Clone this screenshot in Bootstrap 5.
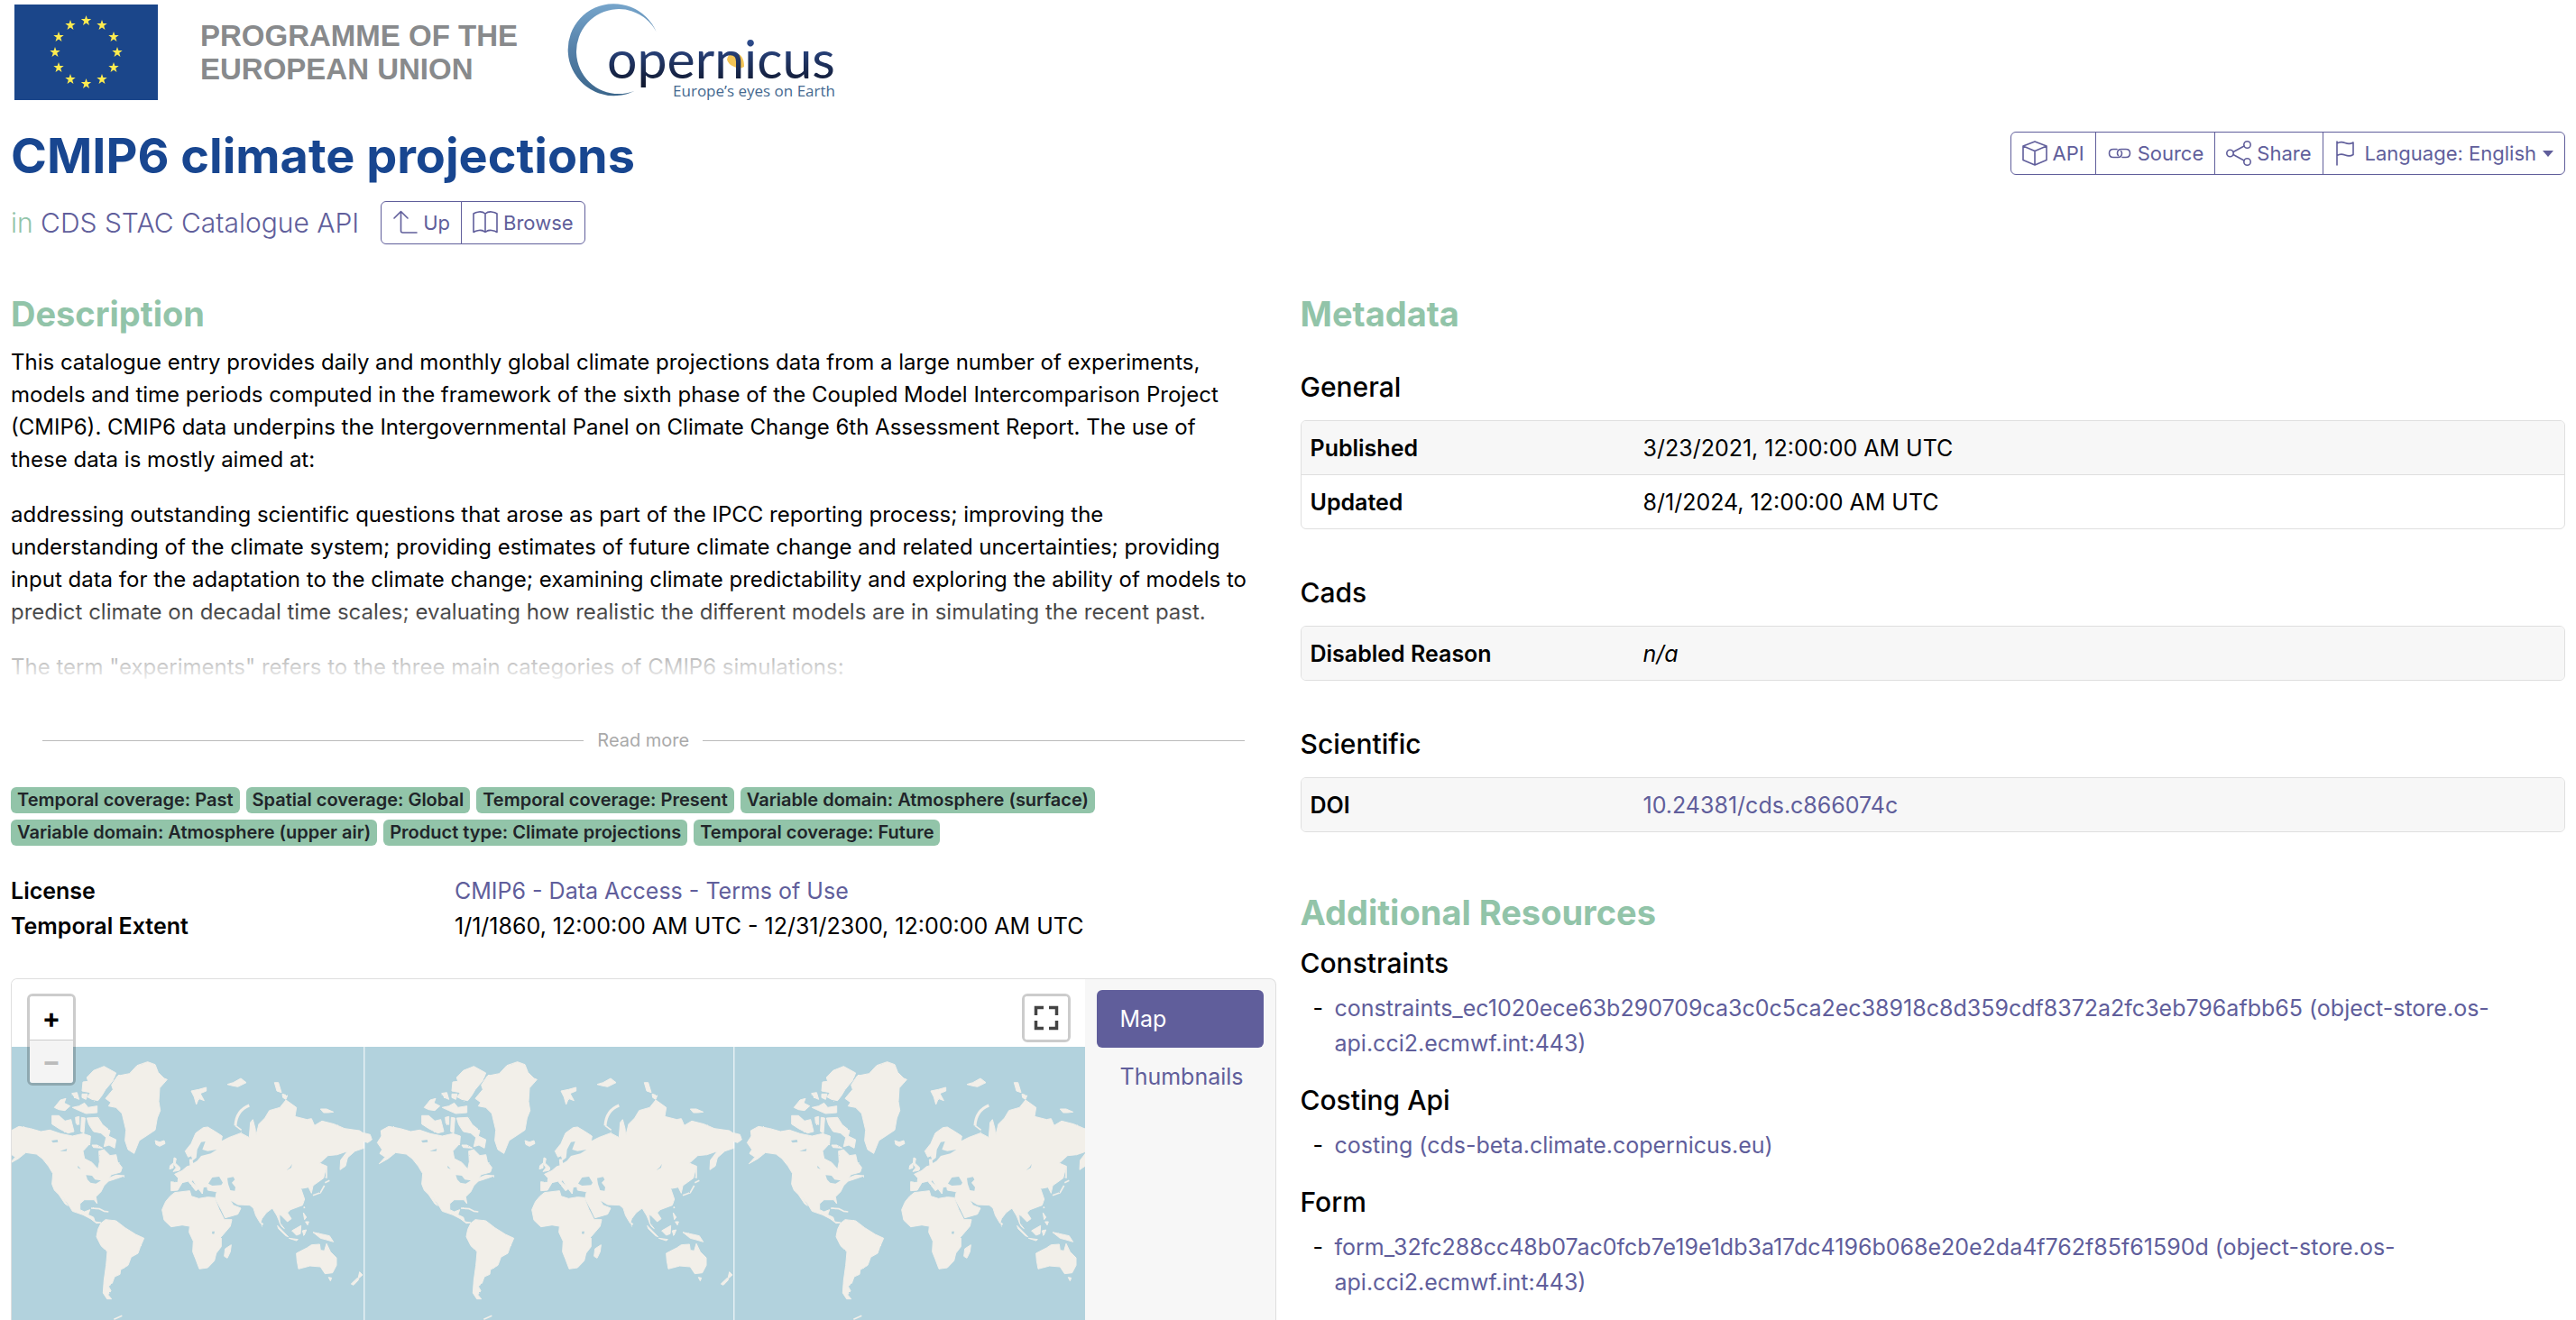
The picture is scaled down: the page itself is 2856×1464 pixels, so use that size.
<!DOCTYPE html>
<html lang="en">
<head>
<meta charset="utf-8">
<meta name="viewport" content="width=device-width, initial-scale=1">
<title>CMIP6 climate projections</title>
<link href="https://cdn.jsdelivr.net/npm/bootstrap@5.3.0/dist/css/bootstrap.min.css" rel="stylesheet">
<style>
:root{--violet:#605e9b;--mint:#92c4a9;--line:#dfdfdf;--shade:#f7f7f7}
body{font-family:Inter,"Liberation Sans",sans-serif;font-size:25px;line-height:39px;color:#000;height:100vh;overflow:hidden;padding:5px 12px 0}
a{color:var(--violet);text-decoration:none}
.eu-flag{width:159px;height:106px;margin-left:4px}
.programme{font-family:"Liberation Sans",Arial,sans-serif;font-weight:700;font-size:33px;line-height:37px;color:#888a8c;margin:16px 0 0 47px}
.cop-logo{width:320px;height:116px;margin:-5px 0 -5px 47px}
h1{font-size:54px;line-height:68px;font-weight:700;color:#184690;margin:28px 0 0}
h2{font-size:38px;line-height:48px;font-weight:700;color:var(--mint);margin:0}
h3{font-size:30px;line-height:36px;font-weight:500;margin:0}
.parent-line{font-size:30px;font-weight:300;color:var(--mint)}
.btn-tool{--bs-btn-color:var(--violet);--bs-btn-border-color:var(--violet);--bs-btn-hover-bg:var(--violet);--bs-btn-hover-color:#fff;--bs-btn-padding-x:12px;--bs-btn-padding-y:0;--bs-btn-border-radius:6px;--bs-btn-font-size:22px;--bs-btn-line-height:46px;display:inline-flex;align-items:center;gap:6px}
.btn-tool svg{width:28px;height:28px;fill:none;stroke:currentColor;stroke-width:1.6;stroke-linejoin:round;stroke-linecap:round}
.btn-tool.dropdown-toggle::after{margin-left:1px;vertical-align:0;border-top-width:7px;border-left-width:6px;border-right-width:6px}
.toolbar-top{margin-top:35px}
.main-row{--bs-gutter-x:27px;margin-top:53px}
.intro{position:relative;margin-top:12px;max-height:376px;overflow:hidden;font-size:24px;line-height:36px}
.intro p{margin:0 0 25px}
.intro::after{content:"";position:absolute;inset:auto 0 0 0;height:112px;background:linear-gradient(rgba(255,255,255,0),#fff)}
.read-more{margin:46px 35px 0;gap:15px}
.read-more hr{flex:1;margin:0;border-color:#bbb;opacity:1;color:#d8d8d8}
.read-more button{font-size:20px;line-height:30px;color:#aaa;background:none;border:0;padding:0}
.tag-list{margin-top:37px;gap:7px;max-width:1300px}
.tag-list .badge{background:var(--mint);color:#212529;font-size:20px;line-height:29px;font-weight:600;padding:0 7px;border-radius:6px}
.facts{margin:31px 0 0;display:grid;grid-template-columns:492px 1fr}
.facts dt,.kv th{font-weight:600}
.facts dd{margin:0}
.map-card{margin-top:38px;border:1px solid var(--line);border-bottom:0;border-radius:7px 7px 0 0;overflow:hidden;background:var(--shade)}
.map-pane{position:relative;background:#fff;padding-top:74px}
.map-pane>svg{display:block;width:100%;height:100%}
.map-ctl{position:absolute;top:16px;border:3px solid rgba(0,0,0,.2);border-radius:6px;background-clip:padding-box;overflow:hidden}
.map-ctl button{display:flex;align-items:center;justify-content:center;width:48px;height:48px;border:0;padding:0;background:#fff;font-size:30px;font-weight:700;color:#000}
.map-ctl button+button{border-top:1px solid #ccc;background:#f4f4f4}
.map-ctl button:disabled{color:#bbb}
.side-tabs{width:211px;padding:12px 13px}
.side-tabs .nav-link{font-size:25px;line-height:40px;padding:12px 26px;height:64px;color:var(--violet);border-radius:6px;text-align:left;width:100%}
.side-tabs .nav-link.active{background:var(--violet);color:#fff}
.kv-head{margin-top:52px}
.kv-head.first{margin-top:39px}
.kv-box{margin-top:19px;border:1px solid var(--line);border-radius:6px;overflow:hidden}
.kv{width:100%}
.kv th,.kv td{padding:11px 10px 9px}
.kv th{width:369px}
.kv tr:nth-child(odd){background:var(--shade)}
.kv tr+tr{border-top:1px solid var(--line)}
.resources{margin-top:65px}
.resources h3{margin-top:14px}
.resources ul{list-style:none;margin:13px 0 25px;padding-left:38px}
.resources ul+h3{margin-top:0}
.resources li::before{content:"-";float:left;margin-left:-24px}
</style>
</head>
<body class="d-flex flex-column">
<header>
  <div class="d-flex align-items-start">
    <svg class="eu-flag" viewBox="0 0 159 106" role="img" aria-label="European Union flag">
      <defs><path id="star" fill="#ffec4f" d="M0-6 1.4-1.9 5.7-1.9 2.2.8 3.5 4.9 0 2.4-3.5 4.9-2.2.8-5.7-1.9-1.4-1.9Z"/></defs>
      <rect width="159" height="106" fill="#1b468a"/>
      <use href="#star" x="79.500" y="18"/><use href="#star" x="97" y="23"/><use href="#star" x="110" y="36"/><use href="#star" x="114" y="53"/><use href="#star" x="110" y="70"/><use href="#star" x="97" y="83"/><use href="#star" x="79.500" y="88"/><use href="#star" x="62" y="83"/><use href="#star" x="49" y="70"/><use href="#star" x="45" y="53"/><use href="#star" x="49" y="36"/><use href="#star" x="62" y="23"/>
    </svg>
    <div class="programme">PROGRAMME OF THE<br>EUROPEAN UNION</div>
    <svg class="cop-logo" viewBox="0 0 320 116" role="img" aria-label="Copernicus, Europe's eyes on Earth">
      <defs>
        <linearGradient id="arc" x1="0" y1="0" x2="0" y2="1"><stop offset="0" stop-color="#76a5cb"/><stop offset=".5" stop-color="#5580a8"/><stop offset="1" stop-color="#3c678c"/></linearGradient>
        <linearGradient id="word" gradientUnits="userSpaceOnUse" x1="0" y1="46" x2="0" y2="92"><stop offset="0" stop-color="#2d4b8c"/><stop offset="1" stop-color="#111a33"/></linearGradient>
      </defs>
      <path transform="scale(.3333)" fill="url(#arc)" d="M320 106A153 153 0 1 0 248 302A141 141 0 1 1 320 106Z"/>
      <path fill="#f3c455" d="M185 66Q186 59 194 59Q204 60 204 74Q199 77 193 74Q186 71 185 66Z"/>
      <text x="52" y="87" font-family="Lato,sans-serif" font-size="59" fill="url(#word)">opernicus</text>
      <text x="305" y="107" text-anchor="end" font-family="'Open Sans',sans-serif" font-size="17" fill="#44688f">Europe’s eyes on Earth</text>
    </svg>
  </div>
  <div class="d-flex justify-content-between align-items-start">
    <div>
      <h1>CMIP6 climate projections</h1>
      <div class="d-flex align-items-center mt-3 parent-line">
        <span>in <a href="#">CDS STAC Catalogue API</a></span>
        <div class="btn-group ms-4">
          <a href="#" class="btn btn-tool"><svg viewBox="0 0 28 28"><path d="M2 9 9.500 1.500 17 9M9.500 2V23Q9.500 25 11.500 25H27"/></svg>Up</a>
          <a href="#" class="btn btn-tool"><svg viewBox="0 0 28 28"><path d="M14 4Q11 1.500 7 2 3 2.500 1 4V24.500Q3 23 7 22.500 11 22 14 24.500 17 22 21 22.500 25 23 27 24.500V4Q25 2.500 21 2 17 1.500 14 4ZM14 4V24.500"/></svg>Browse</a>
        </div>
      </div>
    </div>
    <div class="btn-group toolbar-top">
      <button type="button" class="btn btn-tool"><svg viewBox="0 0 28 28"><path d="M14 1 27 6V21.500L14 27 1 21.500V6ZM1 6 14 11.500 27 6M14 11.500V27"/></svg>API</button>
      <a href="#" class="btn btn-tool"><svg viewBox="0 0 28 28"><path d="M11 9.500H7Q2.500 9.500 2.500 14T7 18.500H12Q16.500 18.500 16.500 14 16.500 12.500 15.500 11.500M17 18.500H21Q25.500 18.500 25.500 14T21 9.500H16Q11.500 9.500 11.500 14 11.500 15.500 12.500 16.500"/></svg>Source</a>
      <button type="button" class="btn btn-tool"><svg viewBox="0 0 28 28"><circle cx="4.500" cy="14" r="3.700"/><circle cx="23.500" cy="4.500" r="3.700"/><circle cx="23.500" cy="23.500" r="3.700"/><path d="M8 12.500 20 6M8 15.500 20 22"/></svg>Share</button>
      <button type="button" class="btn btn-tool dropdown-toggle" data-bs-toggle="dropdown"><svg viewBox="0 0 28 28"><path d="M3 1V27M3 3Q7 .5 12 2.500T21 2V15.500Q17 18 12 16T3 16.500"/></svg>Language: English</button>
    </div>
  </div>
</header>
<main class="row main-row flex-grow-1 overflow-hidden">
  <section class="col-6 d-flex flex-column h-100">
    <h2>Description</h2>
    <div class="intro">
      <p>This catalogue entry provides daily and monthly global climate projections data from a large number of experiments, models and time periods computed in the framework of the sixth phase of the Coupled Model Intercomparison Project (CMIP6). CMIP6 data underpins the Intergovernmental Panel on Climate Change 6th Assessment Report. The use of<br>these data is mostly aimed at:</p>
      <p>addressing outstanding scientific questions that arose as part of the IPCC reporting process; improving the<br>understanding of the climate system; providing estimates of future climate change and related uncertainties; providing<br>input data for the adaptation to the climate change; examining climate predictability and exploring the ability of models to predict climate on decadal time scales; evaluating how realistic the different models are in simulating the recent past.</p>
      <p>The term "experiments" refers to the three main categories of CMIP6 simulations:</p>
    </div>
    <div class="read-more d-flex align-items-center"><hr><button type="button">Read more</button><hr></div>
    <div class="tag-list d-flex flex-wrap">
      <span class="badge">Temporal coverage: Past</span><span class="badge">Spatial coverage: Global</span><span class="badge">Temporal coverage: Present</span><span class="badge">Variable domain: Atmosphere (surface)</span><span class="badge">Variable domain: Atmosphere (upper air)</span><span class="badge">Product type: Climate projections</span><span class="badge">Temporal coverage: Future</span>
    </div>
    <dl class="facts">
      <dt>License</dt><dd><a href="#">CMIP6 - Data Access - Terms of Use</a></dd>
      <dt>Temporal Extent</dt><dd>1/1/1860, 12:00:00 AM UTC - 12/31/2300, 12:00:00 AM UTC</dd>
    </dl>
    <div class="map-card d-flex flex-grow-1">
      <div class="map-pane flex-grow-1">
        <svg viewBox="38 0 3573 912" preserveAspectRatio="xMinYMin slice" role="img" aria-label="World map">
          <defs>
            <filter id="coast" x="-5%" y="-5%" width="110%" height="110%"><feTurbulence type="fractalNoise" baseFrequency=".12" numOctaves="2" seed="4"/><feDisplacementMap in="SourceGraphic" scale="5" xChannelSelector="R" yChannelSelector="G"/></filter>
            <g id="world">
              <g fill="#f2efe9" stroke="#f2efe9" stroke-width="3" stroke-linejoin="round" filter="url(#coast)">
                <path d="M24 322 38 300 36 282 62 268 100 275 135 285 165 280 200 292 240 300 275 292 300 300 298 325 275 350 280 375 305 388 325 410 330 385 328 350 345 345 365 365 385 362 390 385 405 405 400 420 370 428 360 440 385 430 413 432 385 442 360 450 345 465 335 485 318 502 322 525 312 512 280 512 265 525 265 545 280 552 298 545 292 562 310 570 315 585 335 588 320 590 300 575 275 562 240 550 225 525 205 500 225 532 215 525 195 495 180 480 172 460 175 425 160 400 140 375 120 360 85 355 60 375 30 392 50 370 32 358 40 345Z"/>
                <path d="M335 590 350 578 385 582 415 605 450 627 478 640 465 670 458 690 435 703 425 730 400 745 398 760 380 768 372 790 360 800 368 815 358 828 370 842 355 842 342 822 345 780 352 730 356 685 335 665 320 635 325 610Z"/>
                <path d="M350 175 375 145 370 130 390 100 430 92 455 65 490 53 515 62 525 88 545 108 555 112 530 140 527 185 532 215 522 240 515 280 485 300 462 315 445 358 425 345 415 315 418 280 405 225 385 205 360 200 368 188Z"/>
                <path d="M288 105 310 82 345 68 385 90 375 115 350 145 338 165 325 182 305 178 290 170 300 155 272 150 275 120 292 118Z"/>
                <path d="M288 240 325 238 340 262 365 282 360 300 385 312 380 340 362 330 345 335 352 305 335 290 310 285 295 262ZM172 232 195 232 215 250 235 245 245 285 225 290 195 275 172 260ZM180 205 200 180 218 175 212 190 232 200 215 215 195 212ZM240 205 262 200 280 190 292 205 322 200 322 222 285 225 262 215ZM238 158 255 155 262 178 248 172ZM250 238 262 235 262 262 252 258ZM270 238 282 240 278 290 268 285ZM305 330 322 330 340 340 310 338ZM272 160 290 160 285 178 272 172Z"/>
                <path d="M515 315 530 320 545 315 548 325 530 334 518 328ZM578 372 585 375 582 390 598 405 596 414 575 418 585 405 576 392ZM565 398 575 390 575 406 563 410Z"/>
                <path d="M565 500 580 488 630 482 635 500 660 508 690 503 712 505 728 545 745 578 770 578 765 600 735 635 735 668 718 690 712 715 690 738 662 742 650 710 640 685 642 650 628 620 630 600 605 596 568 602 545 580 538 545 550 518Z"/>
                <path d="M768 662 765 685 755 706 745 700 748 675Z"/>
                <path d="M568 452 590 455 592 440 580 427 605 415 620 402 632 398 630 378 640 378 636 365 625 370 615 350 635 325 650 290 675 272 690 270 715 285 738 300 735 318 760 305 800 290 828 305 832 255 840 245 848 275 850 300 860 260 880 240 895 215 930 205 950 180 985 205 980 235 1020 245 1035 242 1045 265 1070 250 1110 260 1145 275 1195 282 1210 292V340L1180 350 1155 372 1148 400 1130 412 1132 380 1155 350 1120 362 1090 365 1062 390 1085 400 1075 440 1040 465 1035 490 1025 470 1000 475 1012 510 1005 530 965 545 955 555 968 575 955 585 935 565 928 560 930 590 945 608 935 600 920 565 905 540 885 555 870 575 865 590 850 565 842 540 830 530 790 528 764 512 775 530 800 540 790 560 748 572 735 545 715 508 720 485 690 480 688 468 675 470 672 492 655 470 640 445 636 452 660 475 650 482 625 450 605 455 590 480 568 482Z"/>
                <path d="M-20 290 0 295 6 312 -8 322-20 318Z"/>
                <path d="M985 690 1020 672 1035 662 1062 660 1065 680 1078 682 1085 658 1098 685 1118 705 1118 730 1105 755 1080 758 1065 735 1030 732 992 742 987 715ZM1092 770 1102 772 1098 782ZM1195 752 1205 762 1190 775ZM1188 772 1192 778 1175 796 1167 792Z"/>
                <path d="M970 615 1000 598 998 625 985 630ZM922 598 958 635 950 632 925 608ZM960 640 990 644 985 648ZM1005 615 1018 612 1010 632ZM1040 620 1095 632 1108 652 1085 645 1065 640ZM1008 555 1018 570 1012 578ZM1015 585 1026 585 1022 596ZM868 588 874 592 870 598Z"/>
                <path d="M635 150 660 145 685 138 685 150 665 158 678 182 660 175 652 195 645 170ZM755 128 775 122 800 108 818 122 790 136 770 132ZM912 122 925 122 935 155 920 150ZM938 160 955 165 950 178 940 172ZM1065 210 1085 210 1108 220 1090 222 1075 222Z"/>
                <g fill="none"><path stroke-width="9" d="M782 265Q785 215 828 198"/><path stroke-width="5" d="M782 265 802 280M1085 400V440M1040 497 1065 488 1078 465M1080 455 1095 448M302 540 330 542 345 550 360 552M1010 535 1012 540M378 910 405 898"/></g>
              </g>
              <g fill="#b2d2dd" stroke="none">
                <path d="M692 458 705 438 728 435 740 455 735 463 705 465ZM755 440 775 436 780 445 770 455 782 470 780 482 765 480 758 460ZM655 345 668 320 682 318 672 345 690 350 720 345 700 358 668 366 655 382 642 390 640 382 652 372ZM705 617 713 617 711 626 704 625ZM970 392 968 405 952 414 965 402ZM285 430 305 432 315 445 335 448 318 458 300 455 290 445ZM170 315 190 312 192 320 175 322ZM198 350 222 342 220 350ZM258 398 268 410 258 406Z"/>
              </g>
              <path d="M1210.500 3V912" stroke="#fff" stroke-width="3"/>
            </g>
          </defs>
          <rect x="0" y="3" width="3700" height="1200" fill="#b2d2dd"/>
          <use href="#world"/><use href="#world" x="1230"/><use href="#world" x="2460"/>
        </svg>
        <div class="map-ctl" style="left:17px"><button type="button" aria-label="Zoom in">+</button><button type="button" aria-label="Zoom out" disabled>−</button></div>
        <div class="map-ctl" style="right:16px"><button type="button" aria-label="Full screen"><svg width="28" height="28" viewBox="0 0 28 28" fill="none" stroke="#444" stroke-width="3.500"><path d="M2.500 11V2.500H11M17 2.500H25.500V11M25.500 17V25.500H17M11 25.500H2.500V17"/></svg></button></div>
      </div>
      <div class="side-tabs nav nav-pills flex-column flex-nowrap flex-shrink-0">
        <button type="button" class="nav-link active">Map</button>
        <button type="button" class="nav-link">Thumbnails</button>
      </div>
    </div>
  </section>
  <section class="col-6">
    <h2>Metadata</h2>
    <h3 class="kv-head first">General</h3>
    <div class="kv-box"><table class="kv"><tbody><tr><th scope="row">Published</th><td>3/23/2021, 12:00:00 AM UTC</td></tr><tr><th scope="row">Updated</th><td>8/1/2024, 12:00:00 AM UTC</td></tr></tbody></table></div>
    <h3 class="kv-head">Cads</h3>
    <div class="kv-box"><table class="kv"><tbody><tr><th scope="row">Disabled Reason</th><td><i>n/a</i></td></tr></tbody></table></div>
    <h3 class="kv-head">Scientific</h3>
    <div class="kv-box"><table class="kv"><tbody><tr><th scope="row">DOI</th><td><a href="#">10.24381/cds.c866074c</a></td></tr></tbody></table></div>
    <div class="resources">
      <h2>Additional Resources</h2>
      <h3>Constraints</h3>
      <ul><li><a href="#">constraints_ec1020ece63b290709ca3c0c5ca2ec38918c8d359cdf8372a2fc3eb796afbb65 (object-store.os-api.cci2.ecmwf.int:443)</a></li></ul>
      <h3>Costing Api</h3>
      <ul><li><a href="#">costing (cds-beta.climate.copernicus.eu)</a></li></ul>
      <h3>Form</h3>
      <ul><li><a href="#">form_32fc288cc48b07ac0fcb7e19e1db3a17dc4196b068e20e2da4f762f85f61590d (object-store.os-api.cci2.ecmwf.int:443)</a></li></ul>
    </div>
  </section>
</main>
<script src="https://cdn.jsdelivr.net/npm/bootstrap@5.3.0/dist/js/bootstrap.bundle.min.js"></script>
</body>
</html>
